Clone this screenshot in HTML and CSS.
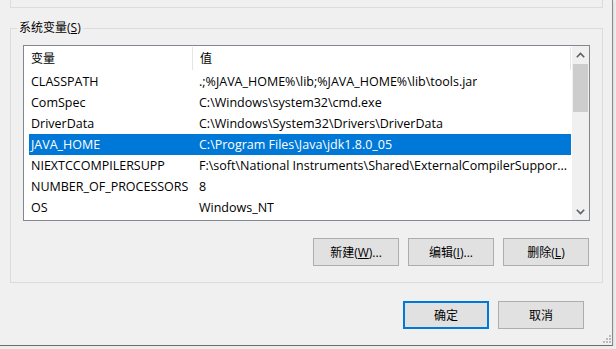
FILE: index.html
```html
<!DOCTYPE html>
<html lang="zh-CN">

<head>
    <meta charset="UTF-8">
    <title>环境变量</title>
    <link rel="stylesheet" href="styles.css">
</head>

<body>
    <div class="window">
        <div class="upper-group"></div>

        <fieldset class="group">
            <legend>系统变量(<u>S</u>)</legend>

            <div class="listbox">
                <div class="list-view">
                    <div class="list-head">
                        <div class="head-cell head-name">变量</div>
                        <div class="head-cell head-value">值</div>
                    </div>
                    <div class="row"><span class="cell-name">CLASSPATH</span><span class="cell-value">.;%JAVA_HOME%\lib;%JAVA_HOME%\lib\tools.jar</span></div>
                    <div class="row"><span class="cell-name">ComSpec</span><span class="cell-value">C:\Windows\system32\cmd.exe</span></div>
                    <div class="row"><span class="cell-name">DriverData</span><span class="cell-value">C:\Windows\System32\Drivers\DriverData</span></div>
                    <div class="row selected"><span class="cell-name">JAVA_HOME</span><span class="cell-value">C:\Program Files\Java\jdk1.8.0_05</span></div>
                    <div class="row"><span class="cell-name">NIEXTCCOMPILERSUPP</span><span class="cell-value">F:\soft\National Instruments\Shared\ExternalCompilerSuppor...</span></div>
                    <div class="row"><span class="cell-name">NUMBER_OF_PROCESSORS</span><span class="cell-value">8</span></div>
                    <div class="row"><span class="cell-name">OS</span><span class="cell-value">Windows_NT</span></div>
                </div>
                <div class="scrollbar">
                    <div class="sb-arrow">
                        <svg width="9" height="6" viewBox="0 0 9 6"><path d="M0.8 5.2 L4.5 1.5 L8.2 5.2" fill="none" stroke="#606060" stroke-width="1.6"/></svg>
                    </div>
                    <div class="sb-track"><div class="sb-thumb"></div></div>
                    <div class="sb-arrow">
                        <svg width="9" height="6" viewBox="0 0 9 6"><path d="M0.8 0.8 L4.5 4.5 L8.2 0.8" fill="none" stroke="#606060" stroke-width="1.6"/></svg>
                    </div>
                </div>
            </div>

            <div class="btn-row">
                <button class="btn">新建(<u>W</u>)...</button>
                <button class="btn">编辑(<u>I</u>)...</button>
                <button class="btn">删除(<u>L</u>)</button>
            </div>
        </fieldset>

        <div class="dialog-buttons">
            <button class="btn default">确定</button>
            <button class="btn">取消</button>
        </div>

        <svg class="grip" width="9" height="9" viewBox="0 0 9 9">
            <rect x="6" y="0" width="2" height="2" fill="#bcbcbc"/>
            <rect x="3" y="3" width="2" height="2" fill="#bcbcbc"/>
            <rect x="6" y="3" width="2" height="2" fill="#bcbcbc"/>
            <rect x="0" y="6" width="2" height="2" fill="#bcbcbc"/>
            <rect x="3" y="6" width="2" height="2" fill="#bcbcbc"/>
            <rect x="6" y="6" width="2" height="2" fill="#bcbcbc"/>
        </svg>
    </div>
</body>

</html>
```

FILE: styles.css
```css
body {
    margin: 0;
    background-color: #ececec;
    font-family: "Open Sans", "Noto Sans CJK SC", sans-serif;
    font-size: 12px;
    color: #000;
}

.window {
    position: relative;
    box-sizing: border-box;
    width: 613px;
    height: 346px;
    background-color: #f0f0f0;
    border-right: 1px solid #8a8a8a;
    border-bottom: 1px solid #6d6d6d;
    box-shadow: 0 2px 2px rgba(0, 0, 0, .18);
}

.upper-group {
    height: 8px;
    margin: 0 9px 0 10px;
    box-sizing: border-box;
    border: 1px solid #dcdcdc;
    border-top: none;
}

.group {
    margin: 12px 9px 0 10px;
    padding: 0;
    border: 1px solid #dcdcdc;
    min-width: 0;
}

.group legend {
    margin-left: 6px;
    padding: 0 2px;
    line-height: 16px;
}

.listbox {
    display: flex;
    width: 567px;
    height: 176px;
    box-sizing: border-box;
    margin: 9px 0 0 12px;
    border: 1px solid #828790;
    background-color: #fff;
}

.list-view {
    flex: 1;
    overflow: hidden;
}

.list-head {
    display: flex;
    height: 25px;
    line-height: 25px;
}

.head-cell {
    box-sizing: border-box;
    padding-left: 7px;
    border-right: 1px solid #e5e5e5;
    margin-top: 1px;
    height: 23px;
    line-height: 23px;
}

.head-name {
    width: 169px;
}

.head-value {
    width: 378px;
}

/* 行 */
.row {
    display: flex;
    height: 21px;
    line-height: 21px;
    margin-left: 5px;
    width: 542px;
    white-space: nowrap;
    font-size: 12.5px;
}

.cell-name {
    width: 163px;
    padding-left: 2px;
    box-sizing: border-box;
    overflow: hidden;
}

.cell-value {
    padding-left: 7px;
    overflow: hidden;
}

.row.selected {
    background-color: #0078d7;
    color: #fff;
}

.scrollbar {
    width: 17px;
    display: flex;
    flex-direction: column;
    background-color: #f0f0f0;
}

.sb-arrow {
    height: 17px;
    display: flex;
    align-items: center;
    justify-content: center;
}

.sb-track {
    flex: 1;
    padding: 1px 1px 0;
}

.sb-thumb {
    height: 48px;
    background-color: #cdcdcd;
}

.btn-row {
    display: flex;
    justify-content: flex-end;
    gap: 9px;
    margin: 17px 13px 16px 0;
}

.btn {
    width: 86px;
    height: 28px;
    padding: 0;
    box-sizing: border-box;
    border: 1px solid #adadad;
    background-color: #e1e1e1;
    font-family: "Open Sans", "Noto Sans CJK SC", sans-serif;
    font-size: 12px;
    color: #000;
}

.btn.default {
    border: 2px solid #0078d7;
}

.dialog-buttons {
    display: flex;
    justify-content: flex-end;
    gap: 9px;
    margin: 18px 28px 0 0;
}

.grip {
    position: absolute;
    right: 0;
    bottom: 1px;
}
```
